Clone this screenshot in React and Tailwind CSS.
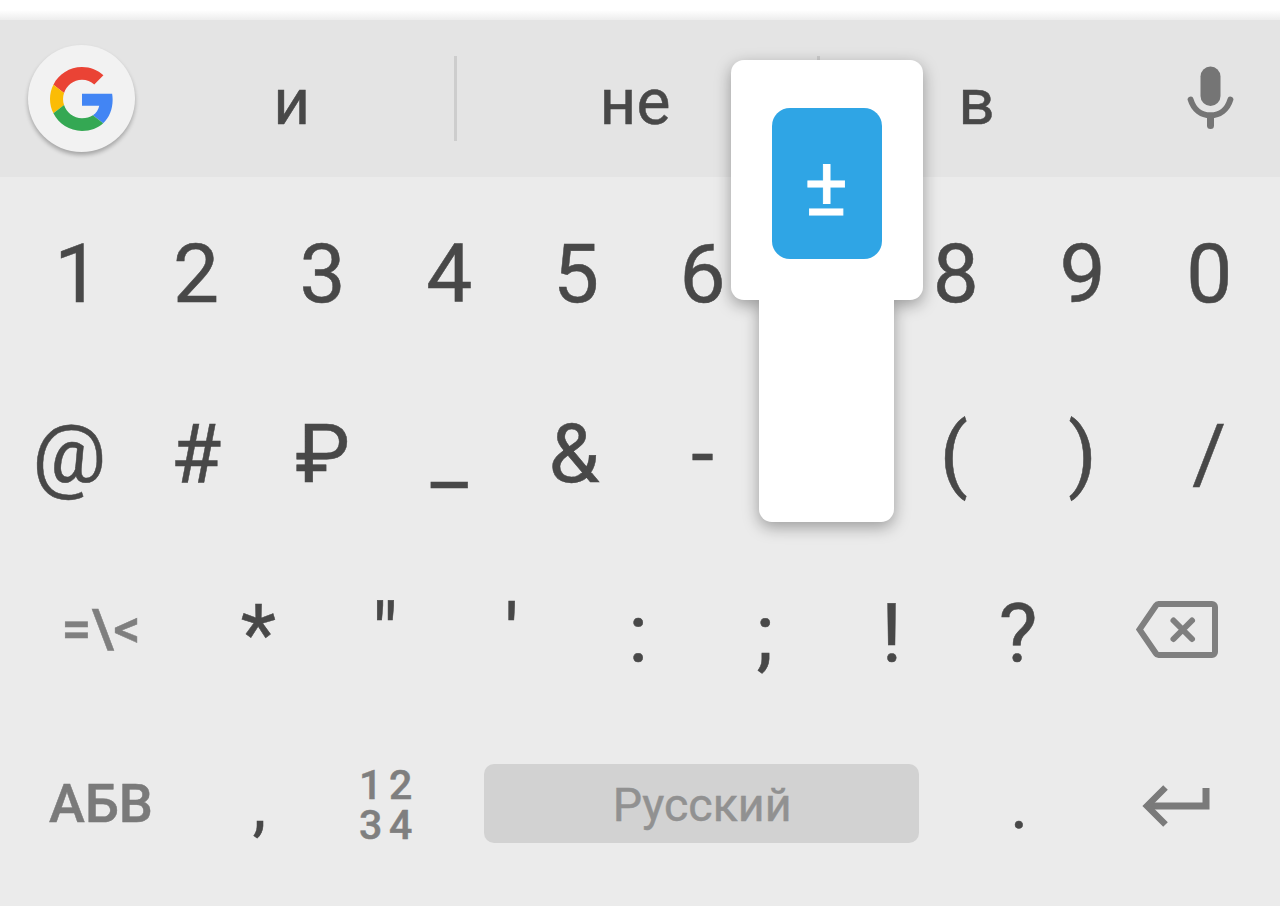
import clsx from "clsx";

const digits = ["1", "2", "3", "4", "5", "6", "", "8", "9", "0"];
const symbols = ["@", "#", "₽", "_", "&", "-", "", "(", ")", "/"];
const punctuation = ["*", '"', "'", ":", ";", "!", "?"];

function GoogleIcon() {
  return (
    <svg viewBox="0 0 48 48" className="size-16">
      <path
        fill="#ea4335"
        d="M24 9.5c3.54 0 6.71 1.22 9.21 3.6l6.85-6.85C35.9 2.38 30.47 0 24 0 14.62 0 6.51 5.38 2.56 13.22l7.98 6.19C12.43 13.72 17.74 9.5 24 9.5z"
      />
      <path
        fill="#4285f4"
        d="M46.98 24.55c0-1.57-.15-3.09-.38-4.55H24v9.02h12.94c-.58 2.96-2.26 5.48-4.78 7.18l7.73 6c4.51-4.18 7.09-10.36 7.09-17.65z"
      />
      <path
        fill="#fbbc05"
        d="M10.53 28.59c-.48-1.45-.76-2.99-.76-4.59s.27-3.14.76-4.59l-7.98-6.19C.92 16.46 0 20.12 0 24c0 3.88.92 7.54 2.56 10.78l7.97-6.19z"
      />
      <path
        fill="#34a853"
        d="M24 48c6.48 0 11.93-2.13 15.89-5.81l-7.73-6c-2.15 1.45-4.92 2.3-8.16 2.3-6.26 0-11.57-4.22-13.47-9.91l-7.98 6.19C6.51 42.62 14.62 48 24 48z"
      />
    </svg>
  );
}

function MicIcon() {
  return (
    <svg viewBox="0 0 48 64" className="h-16 w-12" fill="none" stroke="#757575" strokeLinecap="round">
      <rect x="14.5" y="1.5" width="20" height="39.5" rx="10" fill="#757575" stroke="none" />
      <path d="M4.6 34.5c3 10 10.5 15.800 19.900 15.800s16.900-5.800 19.900-15.800" strokeWidth="6" />
      <path d="M24.5 52v8.5" strokeWidth="7" />
    </svg>
  );
}

function BackspaceIcon() {
  return (
    <svg viewBox="0 0 84 60" className="h-[60px] w-[84px]" fill="none" stroke="#7f7f7f" strokeWidth="6">
      <path d="M23.5 4H77a3 3 0 0 1 3 3v45a3 3 0 0 1-3 3H23.5Q22 55 21 53.5L4.5 29.5 21 5.5Q22 4 23.5 4Z" />
      <path d="M38.5 20.500l18.500 18.500M57 20.500L38.500 39" strokeLinecap="round" />
    </svg>
  );
}

function EnterIcon() {
  return (
    <svg viewBox="0 0 68 44" className="h-11 w-[68px]" fill="none" stroke="#7a7a7a">
      <path d="M64 4v18H6" strokeWidth="7" />
      <path d="M23.5 3.5L5 22l18.500 18.500" strokeWidth="6.5" />
    </svg>
  );
}

function Key({ children, className }) {
  return (
    <button type="button" className={clsx("flex items-center justify-center", className)}>
      {children}
    </button>
  );
}

function KeyPopup() {
  return (
    <div className="absolute left-[730.5px] top-[59.5px] flex w-48 flex-col items-center drop-shadow-[0_5px_8px_rgba(0,0,0,0.34)]">
      <div className="flex h-60 w-full items-start justify-center rounded-[13px] bg-white pt-12">
        <div className="flex h-[151px] w-[110px] items-center justify-center rounded-[18px] bg-[#2fa5e5] pr-px pt-[7px] text-[82px] leading-none text-white [-webkit-text-stroke:0.8px]">
          ±
        </div>
      </div>
      <div className="h-[222px] w-[135px] rounded-b-[13px] bg-white" />
    </div>
  );
}

export default function App() {
  return (
    <main className="relative h-[906px] w-[1280px] overflow-hidden bg-[#ebebeb] font-[Roboto,sans-serif] text-[#484848] [-webkit-text-stroke:0.5px]">
      <div className="h-5 bg-linear-to-b from-white from-50% to-[#ededed]" />

      <header className="flex h-[157px] items-center bg-[#e4e4e4] text-[64px] leading-none">
        <div className="ml-7 flex size-[107px] items-center justify-center rounded-full bg-[#f2f2f2] shadow-[0_3px_4px_rgba(0,0,0,0.28)]">
          <GoogleIcon />
        </div>
        <span className="ml-[-5px] w-[323.5px] pt-[9px] text-center">и</span>
        <span className="h-[85px] w-[3px] bg-[#cdcdcd]" />
        <span className="w-[360px] pr-[3px] pt-[9px] text-center">не</span>
        <span className="h-[85px] w-[3px] bg-[#cdcdcd]" />
        <span className="w-[316px] pr-[2px] pt-[9px] text-center">в</span>
        <div className="mb-[3px] ml-auto mr-[46px]">
          <MicIcon />
        </div>
      </header>

      <section className="pl-[6px] pr-[7.5px] pt-[6.5px] text-[82px] leading-none">
        <div className="grid h-[180px] grid-cols-10">
          {digits.map((label, i) => (
            <Key key={i} className={clsx(label === "1" && "pl-4")}>
              {label}
            </Key>
          ))}
        </div>
        <div className="grid h-[180px] grid-cols-10">
          {symbols.map((label, i) => (
            <Key key={i} className={clsx((label === "&" || label === "(") && "pr-1")}>
              {label}
            </Key>
          ))}
        </div>
        <div className="grid h-[180px] grid-cols-[190px_repeat(7,1fr)_190px]">
          <Key className="pb-2 text-[53px] font-medium text-[#7f7f7f]">=\&lt;</Key>
          {punctuation.map((label) => (
            <Key key={label} className="pr-0.5">
              {label}
            </Key>
          ))}
          <Key className="pb-[7px] pr-0.5">
            <BackspaceIcon />
          </Key>
        </div>
        <div className="grid h-[160px] grid-cols-[190px_repeat(7,1fr)_190px]">
          <Key className="text-[54px] font-medium text-[#7a7a7a]">АБВ</Key>
          <Key className="pt-[3px] text-[68px]">,</Key>
          <Key className="pt-[3px] text-[41px] font-medium leading-[40.5px] text-[#7f7f7f]">
            <span className="grid grid-cols-[30px_24px] text-left">
              <span>1</span>
              <span>2</span>
              <span>3</span>
              <span>4</span>
            </span>
          </Key>
          <Key className="col-span-4 pr-0.5">
            <span className="flex h-[79px] w-[435px] items-center justify-center rounded-[10px] bg-[#d2d2d2] pl-px pt-[3px] text-[46.5px] text-[#919191]">
              Русский
            </span>
          </Key>
          <Key className="pt-[3px] text-[68px]">.</Key>
          <Key className="pr-1 pt-1">
            <EnterIcon />
          </Key>
        </div>
      </section>

      <KeyPopup />
    </main>
  );
}
